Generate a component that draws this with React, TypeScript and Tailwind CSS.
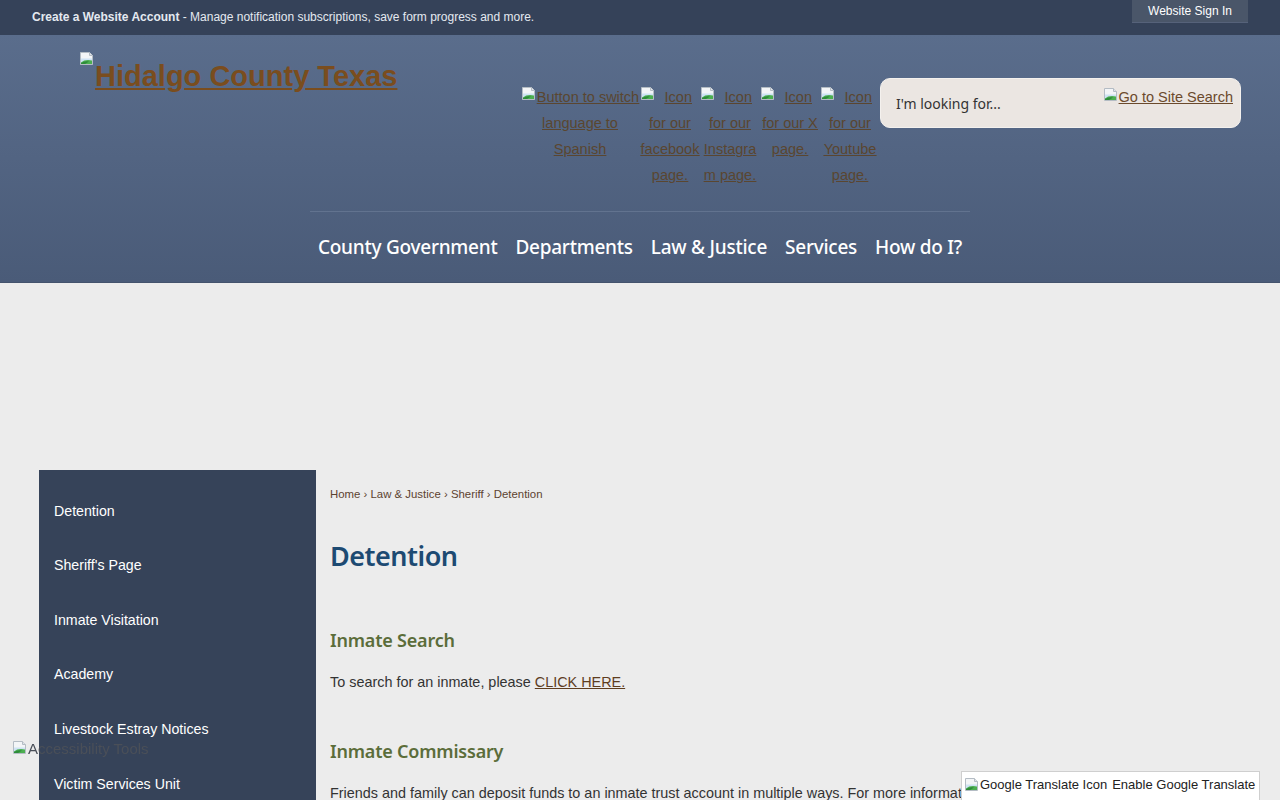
import React from "react";

const sans = "font-['Liberation_Sans',Arial,sans-serif]";
const ubuntu = "font-['Noto_Sans','Open_Sans',sans-serif]";

const BrokenImg = () => (
	<svg width="16" height="16" viewBox="0 0 16 16" className="block shrink-0">
		<path d="M1.5 1.5h9l3 3v9h-12z" fill="#f3f5f7" stroke="#b4bcc4" />
		<path d="M10.5 1.5v3h3" fill="#dfe4e8" stroke="#b4bcc4" />
		<path d="M2 7.5h11v2L2 12z" fill="#cfe3f4" />
		<path d="M2 13V11.5Q6 8 13 9.5V13z" fill="#4caf50" />
		<path d="M2 13V12Q6 9.5 10 10.5L6 13z" fill="#2e8b3a" />
	</svg>
);

const socials = [
	{lines: ["Icon", "for our", "facebook", "page."]},
	{lines: ["Icon", "for our", "Instagra", "m page."]},
	{lines: ["Icon", "for our X", "page."]},
	{lines: ["Icon", "for our", "Youtube", "page."]},
];

const navItems = ["County Government", "Departments", "Law & Justice", "Services", "How do I?"];

const sideItems = [
	"Detention",
	"Sheriff's Page",
	"Inmate Visitation",
	"Academy",
	"Livestock Estray Notices",
	"Victim Services Unit",
	"Sheriff's Office Employment",
	"Forms & Documents",
];

const App = () => {
	return (
		<div className={`min-h-[1100px] bg-[#ececec] ${sans}`}>
			{/* top bar */}
			<div className="h-[35px] bg-[#354259] flex items-start justify-between">
				<p className="pl-[32px] pt-[10px] text-[12px] leading-[15px] text-[#e4e9f0]">
					<span className="font-bold">Create a Website Account</span> - Manage notification
					subscriptions, save form progress and more.
				</p>
				<button className="mr-[32px] h-[23px] w-[116px] bg-[#4a5669] text-[12px] text-white border-b border-[#56627a]">
					Website Sign In
				</button>
			</div>

			{/* header */}
			<header className="bg-gradient-to-b from-[#5a6d8c] to-[#4a5b78] border-b border-[#44536d]">
				<div className="w-[1202px] mx-auto">
					<div className="h-[176px] flex justify-between items-start pt-[16px]">
						<a href="#" className="flex items-start pl-[40px]">
							<BrokenImg />
							<span className="mt-[9px] text-[29px] leading-[32px] font-bold text-[#7a4d1e] underline">
								Hidalgo County Texas
							</span>
						</a>
						<div className="flex items-start mt-[27px]">
							<div className="flex items-start mt-[6px] text-[14.5px] leading-[26px] text-[#5a4630] underline whitespace-nowrap">
								<a href="#" className="w-[120px] shrink-0 text-center flex flex-col">
									<span className="flex items-start justify-center">
										<span className="mt-[2px]">
											<BrokenImg />
										</span>
										<span>Button to switch</span>
									</span>
									<span>language to</span>
									<span>Spanish</span>
								</a>
								{socials.map((s, i) => (
									<a key={i} href="#" className="w-[60px] shrink-0 text-center flex flex-col">
										{s.lines.map((l, j) =>
											j === 0 ? (
												<span key={j} className="flex items-start justify-between pr-[8px]">
													<span className="mt-[2px]">
														<BrokenImg />
													</span>
													<span>{l}</span>
												</span>
											) : (
												<span key={j}>{l}</span>
											)
										)}
									</a>
								))}
							</div>
							<div className="w-[361px] h-[50px] rounded-[10px] bg-[#ebe6e2] border border-[#f4f1ee] flex items-start justify-between">
								<span className={`${ubuntu} mt-[16px] ml-[15px] text-[14px] leading-[18px] text-[#333]`}>
									I'm looking for...
								</span>
								<a href="#" className="mt-[8px] mr-[7px] flex items-start text-[14.5px] leading-[20px] text-[#6b4a2c] underline">
									<BrokenImg />
									<span>Go to Site Search</span>
								</a>
							</div>
						</div>
					</div>
					<div className="mx-auto w-[660px] h-px bg-[#62738f]" />
					<nav className={`${ubuntu} h-[70px] flex items-center justify-center gap-[18px] text-[19px] font-medium text-white`}>
						{navItems.map((n) => (
							<a key={n} href="#" className="tracking-[-0.25px]">
								{n}
							</a>
						))}
					</nav>
				</div>
			</header>

			{/* main */}
			<main className="w-[1202px] mx-auto pt-[187px] flex items-start">
				<aside className="w-[277px] shrink-0 bg-[#364359] pt-[14px] pb-[20px]">
					{sideItems.map((s) => (
						<a key={s} href="#" className="h-[54.6px] flex items-center pl-[15px] text-[14.2px] text-white">
							{s}
						</a>
					))}
				</aside>
				<section className="pl-[14px] flex-1">
					<div className="mt-[16px] text-[11.4px] leading-[16px] text-[#5c4330]">
						<a href="#">Home</a> › <a href="#">Law &amp; Justice</a> › <a href="#">Sheriff</a> ›{" "}
						<a href="#">Detention</a>
					</div>
					<h1 className={`${ubuntu} mt-[37px] text-[27px] leading-[34px] font-semibold text-[#1d4a72] tracking-[-0.5px]`}>
						Detention
					</h1>
					<h2 className={`${ubuntu} mt-[55px] text-[18px] leading-[24px] font-semibold text-[#5b6d3a] tracking-[-0.2px]`}>
						Inmate Search
					</h2>
					<p className="mt-[20px] text-[14.4px] leading-[20px] text-[#333]">
						To search for an inmate, please{" "}
						<a href="#" className="text-[#5e3d1f] underline">
							CLICK HERE.
						</a>
					</p>
					<h2 className={`${ubuntu} mt-[47px] text-[18px] leading-[24px] font-semibold text-[#5b6d3a] tracking-[-0.2px]`}>
						Inmate Commissary
					</h2>
					<p className="mt-[20px] text-[14.4px] leading-[20px] text-[#333] whitespace-nowrap overflow-hidden">
						Friends and family can deposit funds to an inmate trust account in multiple ways. For more
						information, visit the page.
					</p>
				</section>
			</main>

			{/* floating widgets */}
			<div className="fixed left-[12px] top-[740px] flex items-start text-[15px] leading-[18px] text-[#4a4f58]">
				<BrokenImg />
				<span>Accessibility Tools</span>
			</div>
			<div className="fixed left-[961px] top-[771px] w-[299px] h-[40px] bg-white border border-[#cfcfcf] flex items-start pt-[5px] pl-[2px] text-[13px] leading-[16px] text-[#222]">
				<BrokenImg />
				<span>Google Translate Icon</span>
				<span className="ml-[5px]">Enable Google Translate</span>
			</div>
		</div>
	);
};

export default App;
